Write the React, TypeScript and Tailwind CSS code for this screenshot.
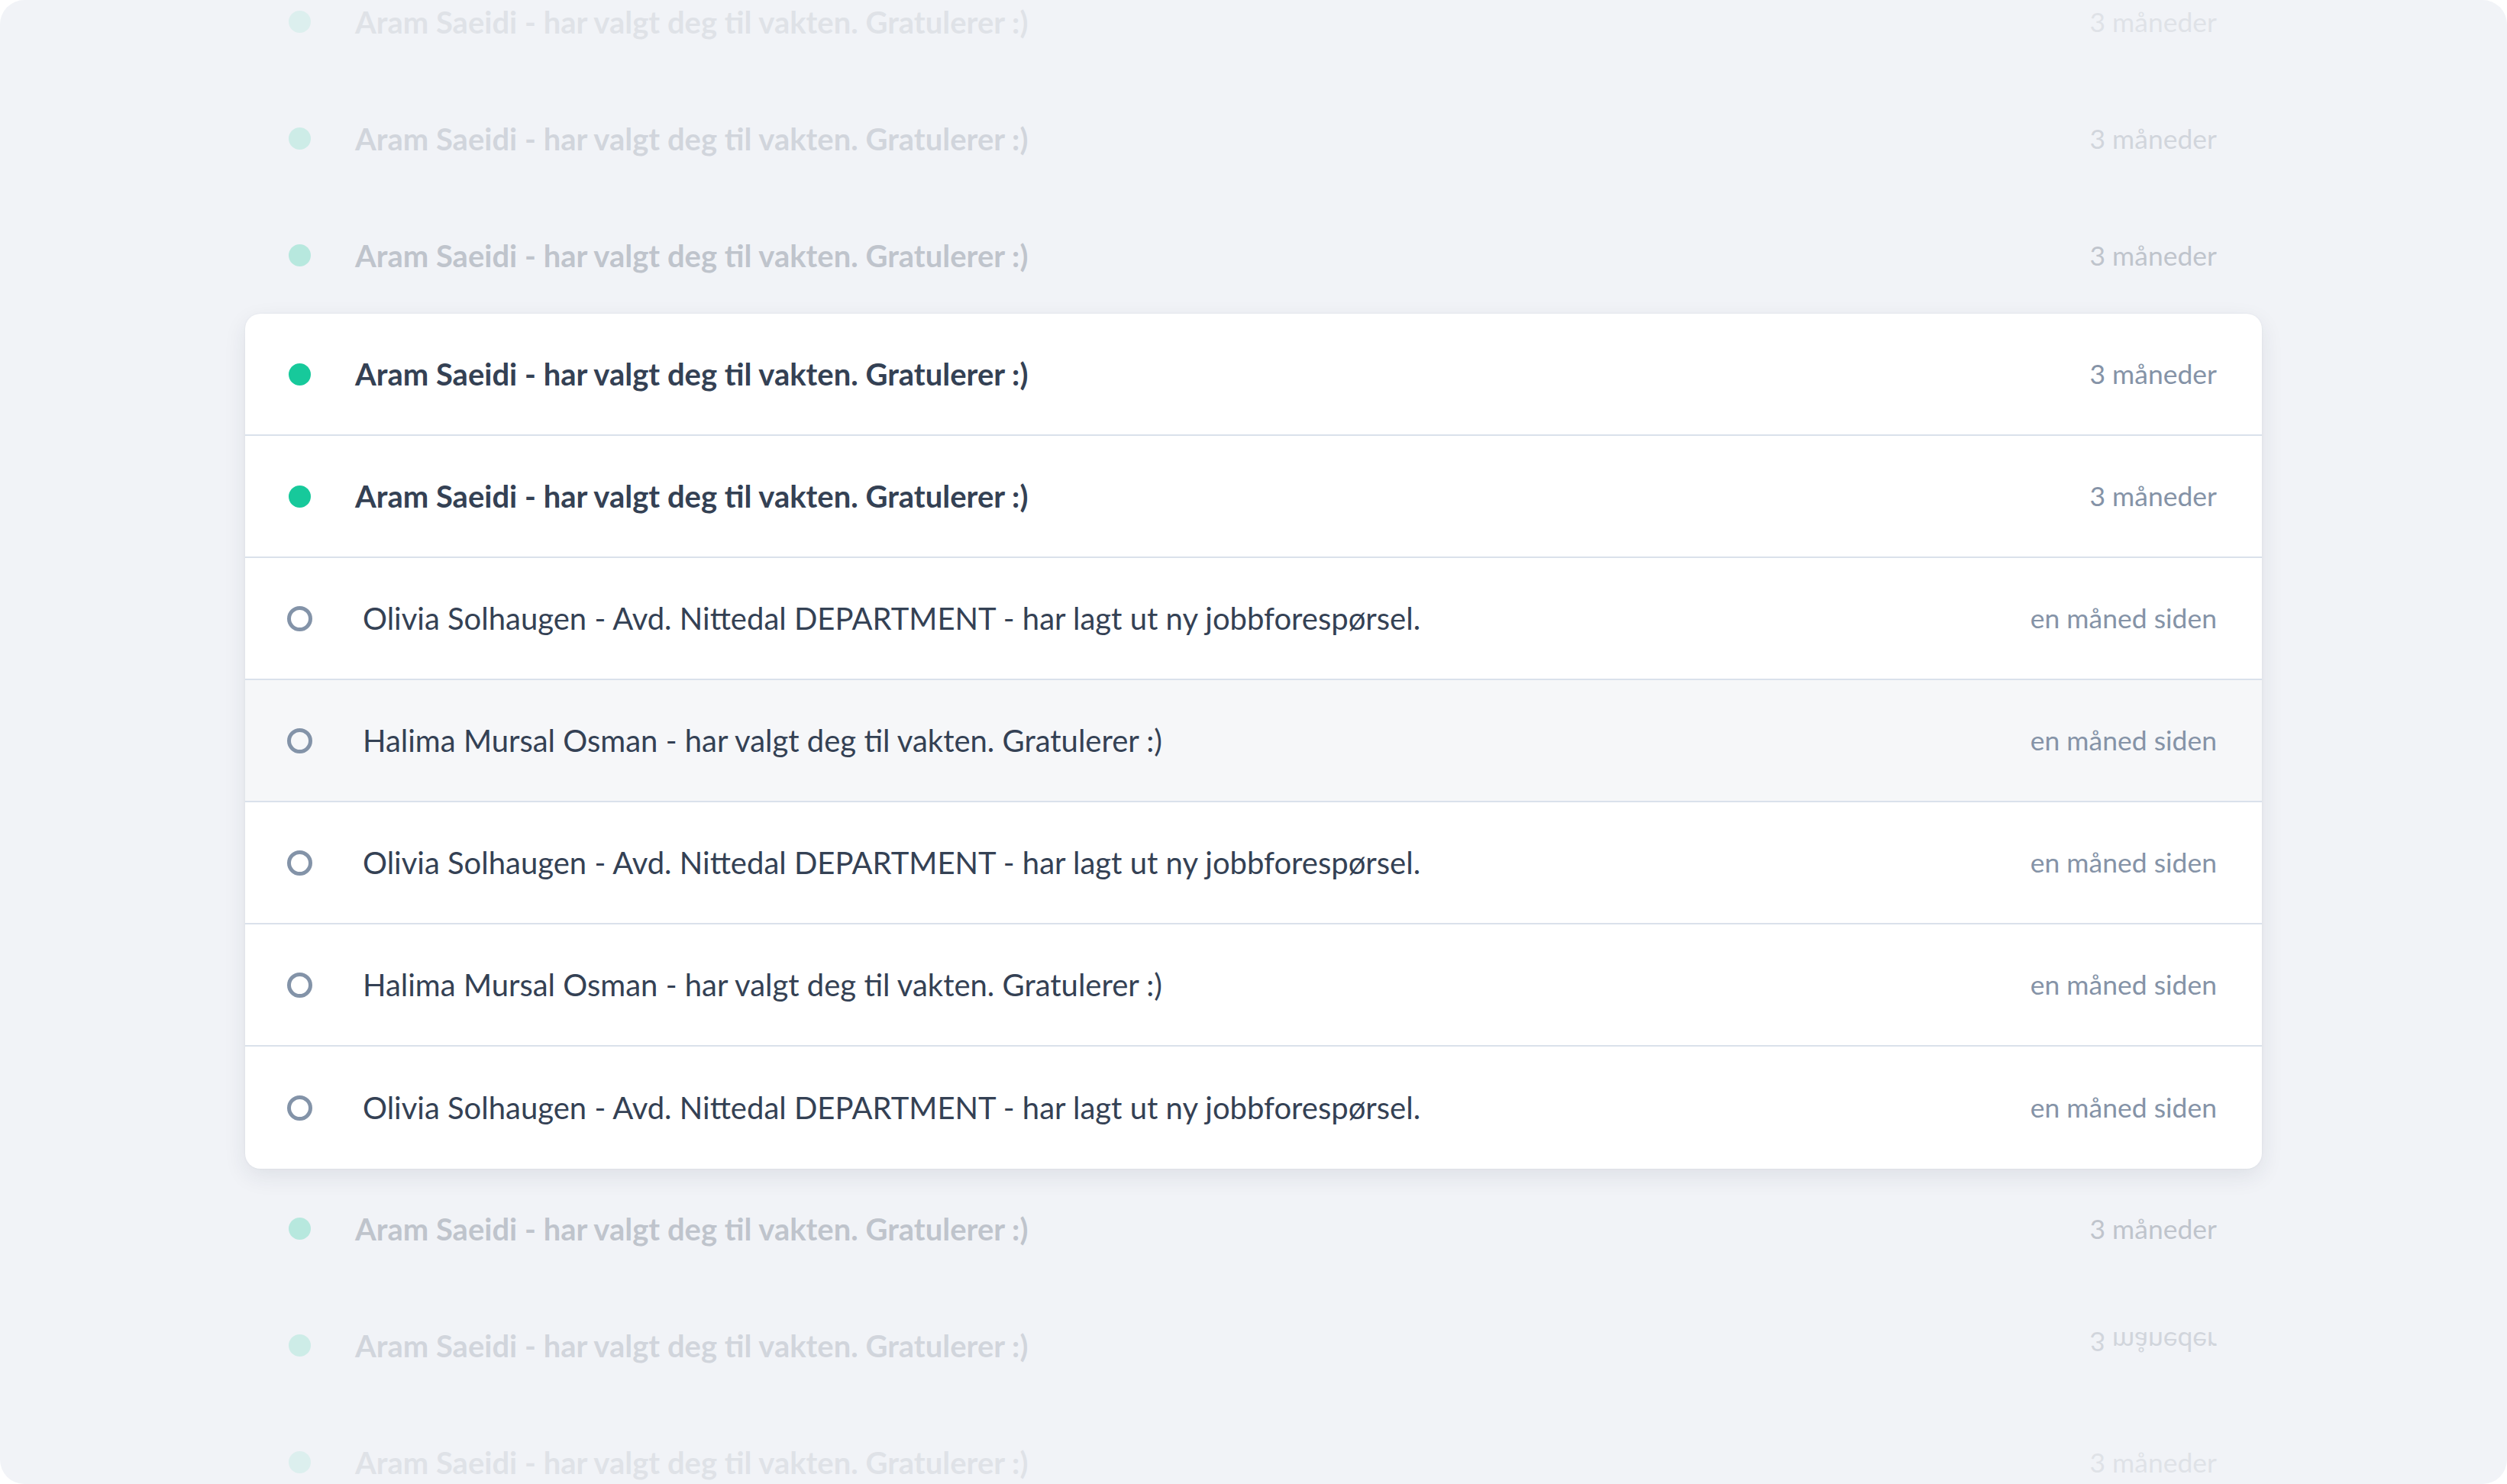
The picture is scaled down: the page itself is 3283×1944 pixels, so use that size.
import React from 'react';

type Item = {
  text: string;
  time: string;
  unread: boolean;
  hover?: boolean;
};

const ARAM = 'Aram Saeidi - har valgt deg til vakten. Gratulerer :)';
const OLIVIA = 'Olivia Solhaugen - Avd. Nittedal DEPARTMENT - har lagt ut ny jobbforespørsel.';
const HALIMA = 'Halima Mursal Osman - har valgt deg til vakten. Gratulerer :)';

const items: Item[] = [
  { text: ARAM, time: '3 måneder', unread: true },
  { text: ARAM, time: '3 måneder', unread: true },
  { text: OLIVIA, time: 'en måned siden', unread: false },
  { text: HALIMA, time: 'en måned siden', unread: false, hover: true },
  { text: OLIVIA, time: 'en måned siden', unread: false },
  { text: HALIMA, time: 'en måned siden', unread: false },
  { text: OLIVIA, time: 'en måned siden', unread: false },
];

function Marker({ unread }: { unread: boolean }) {
  return (
    <div className="w-[33px] h-[33px] shrink-0 flex items-center justify-center">
      {unread ? (
        <span className="block w-[29px] h-[29px] rounded-full bg-[#17c99b]" />
      ) : (
        <span className="block w-[33px] h-[33px] rounded-full border-[5px] border-[#8393a8]" />
      )}
    </div>
  );
}

function Row({ item, last }: { item: Item; last: boolean }) {
  return (
    <div
      className={`h-[160px] flex items-center pl-[55px] pr-[59px] ${
        last ? '' : 'border-b-2 border-[#dae1eb]'
      } ${item.hover ? 'bg-[#f6f7f9]' : ''}`}
    >
      <Marker unread={item.unread} />
      <p
        className={`flex-1 text-[40px] text-[#344154] ${
          item.unread ? 'ml-[56px] font-bold' : 'ml-[66px] font-normal'
        }`}
      >
        {item.text}
      </p>
      <span className="text-[35.5px] text-[#8593a7]">{item.time}</span>
    </div>
  );
}

// faded rows around the card, fading out towards the panel edges
function GhostRow({ fade, flipped }: { fade: string; flipped?: boolean }) {
  return (
    <div className={`h-[153px] flex items-center pl-[55px] pr-[59px] ${fade}`}>
      <Marker unread />
      <p className="flex-1 ml-[56px] text-[40px] font-bold text-[#344154]">{ARAM}</p>
      <span className={`text-[35.5px] text-[#344154] ${flipped ? '-scale-y-100 -translate-y-[4px]' : ''}`}>
        3 måneder
      </span>
    </div>
  );
}

export default function App() {
  return (
    <div className="min-h-screen bg-white" style={{ fontFamily: 'Lato, "Noto Sans", sans-serif' }}>
      <div className="h-[1944px] rounded-[32px] bg-[#f1f3f7] overflow-hidden">
        <div className="mx-[321px] -mt-[48px]">
          <GhostRow fade="opacity-[0.09]" />
          <GhostRow fade="opacity-[0.16]" />
          <GhostRow fade="opacity-[0.26]" />

          <div className="bg-white rounded-[20px] overflow-hidden shadow-[0_10px_30px_rgba(31,45,61,0.09),0_0_3px_rgba(31,45,61,0.06)]">
            {items.map((item, i) => (
              <Row key={i} item={item} last={i === items.length - 1} />
            ))}
          </div>

          <div className="pt-[2px]">
            <GhostRow fade="opacity-[0.26]" />
            <GhostRow fade="opacity-[0.16]" flipped />
            <GhostRow fade="opacity-[0.09]" />
          </div>
        </div>
      </div>
    </div>
  );
}
